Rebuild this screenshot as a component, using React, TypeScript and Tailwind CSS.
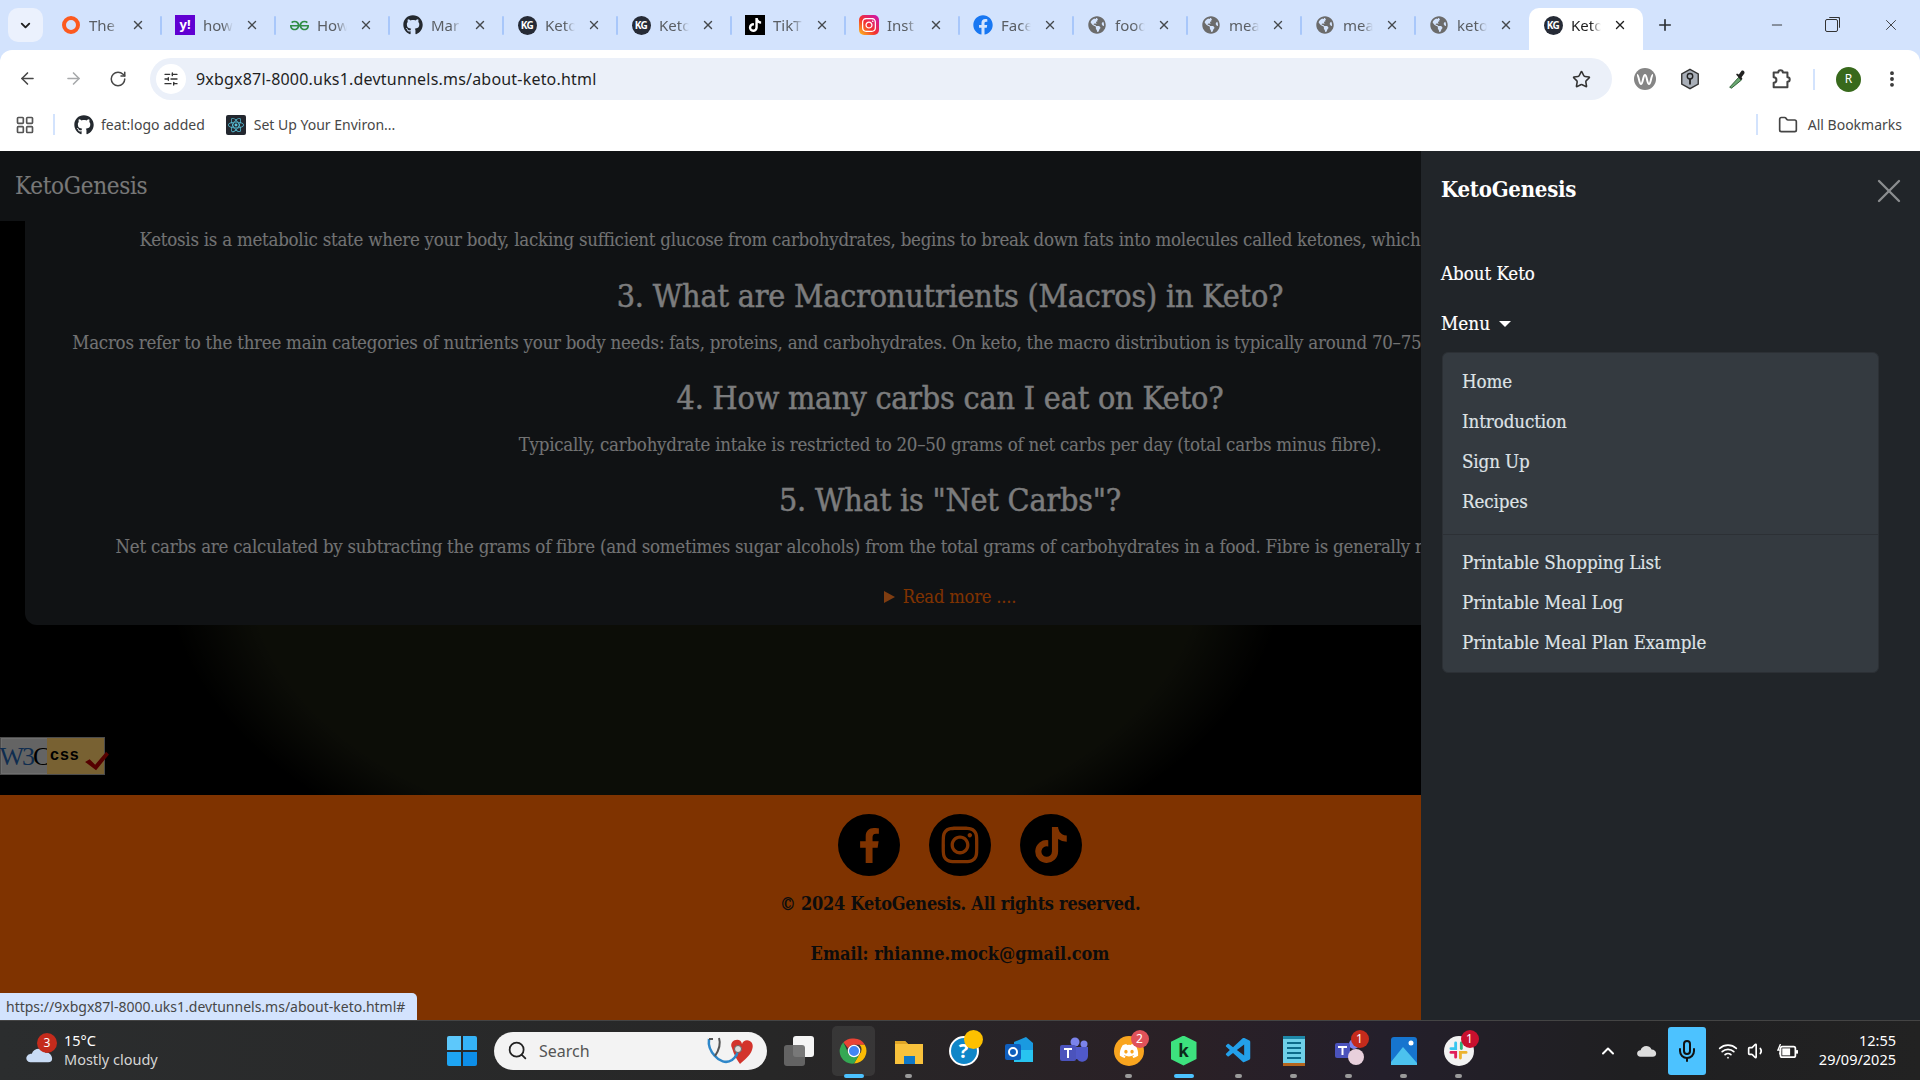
import type { ReactNode } from 'react';
import { ArrowLeft, ArrowRight, ChevronDown, ChevronUp, EllipsisVertical, Folder, LayoutGrid, Mic, Plus, RotateCw, Search, SlidersHorizontal, Star, Volume1, Wifi, X, Minus } from 'lucide-react';
import { FaDiscord, FaFacebook, FaFacebookF, FaGithub, FaGlobeAmericas, FaInstagram, FaTiktok } from 'react-icons/fa';
import { SiGeeksforgeeks, SiReact } from 'react-icons/si';
import { VscVscode } from 'react-icons/vsc';

const Globe = () => <FaGlobeAmericas className="size-[18px] text-[#6b6b6b]" />;
const Kg = () => (
  <div className="flex size-[19px] items-center justify-center rounded-full bg-[#262b36] text-[10px] font-bold tracking-[-0.5px] text-white">KG</div>
);

const tabs: { icon: ReactNode; title: string; active?: boolean }[] = [
  { icon: <div className="size-[18px] rounded-full border-[4px] border-[#fc5a1f]" />, title: 'The' },
  { icon: <div className="flex size-[20px] items-center justify-center bg-[#6001d2] text-[13px] font-bold text-white">y!</div>, title: 'how' },
  { icon: <SiGeeksforgeeks className="size-[19px] text-[#2f8d46]" />, title: 'How' },
  { icon: <FaGithub className="size-[20px] text-[#24292f]" />, title: 'Mar' },
  { icon: <Kg />, title: 'Keto' },
  { icon: <Kg />, title: 'Keto' },
  { icon: <div className="flex size-[20px] items-center justify-center bg-black"><FaTiktok className="size-[14px] text-white" /></div>, title: 'TikT' },
  { icon: <div className="flex size-[20px] items-center justify-center rounded-[5px] bg-[linear-gradient(45deg,#fdc21e,#f3322f_45%,#c913b9)]"><FaInstagram className="size-[16px] text-white" /></div>, title: 'Inst' },
  { icon: <FaFacebook className="size-[20px] text-[#1877f2]" />, title: 'Face' },
  { icon: <Globe />, title: 'food' },
  { icon: <Globe />, title: 'mea' },
  { icon: <Globe />, title: 'mea' },
  { icon: <Globe />, title: 'keto' },
  { icon: <Kg />, title: 'Keto', active: true },
];

function Tab({ icon, title, active, showSep }: { icon: ReactNode; title: string; active?: boolean; showSep: boolean }) {
  return (
    <div className={`relative flex h-[42px] w-[114px] shrink-0 items-center pb-[8px] pl-[14px] pr-[16px] ${active ? 'rounded-t-[10px] bg-white text-[#1f1f1f]' : 'text-[#5a5e63]'}`}>
      <div className="flex w-[20px] shrink-0 justify-center">{icon}</div>
      <div className="ml-[8px] w-[30px] overflow-hidden whitespace-nowrap text-[15px] [mask-image:linear-gradient(to_right,black_65%,transparent)]">{title}</div>
      <X className={`ml-auto size-[14px] ${active ? 'text-[#1f1f1f]' : 'text-[#45494d]'}`} strokeWidth={2.4} />
      {showSep && <div className="absolute top-[8px] right-[-1px] h-[19px] w-[2px] rounded bg-[#a8c7fa]" />}
    </div>
  );
}

function Chrome() {
  return (
    <div className="h-[151px] shrink-0 bg-[#d3e3fd] font-['Noto_Sans','Open_Sans',sans-serif]">
      <div className="flex h-[50px] items-end">
        <div className="mb-[8px] ml-[8px] flex h-[34px] w-[35px] items-center justify-center rounded-[10px] bg-[#ebf1fd]">
          <ChevronDown className="size-[15px] text-[#1f1f1f]" strokeWidth={3} />
        </div>
        <div className="ml-[4px] flex">
          {tabs.map((t, i) => (
            <Tab key={i} icon={t.icon} title={t.title} active={t.active} showSep={i < 12} />
          ))}
        </div>
        <Plus className="mb-[16px] ml-[13px] size-[18px] text-[#2b2f33]" strokeWidth={2.2} />
        <div className="mb-[16px] ml-auto flex items-center text-[#333]">
          <Minus className="mr-[40px] size-[16px]" strokeWidth={1.4} />
          <div className="relative mr-[44px] size-[13px] rounded-[2px] border border-[#333] bg-[#d3e3fd] shadow-[2px_-2px_0_-1px_#d3e3fd,3px_-3px_0_-1px_#333]" />
          <X className="mr-[20px] size-[18px]" strokeWidth={1.2} />
        </div>
      </div>
      <div className="h-[101px] rounded-t-[12px] bg-white">
        <div className="flex h-[50px] items-end">
          <ArrowLeft className="ml-[18px] mb-[12px] size-[19px] text-[#474747]" strokeWidth={2} />
          <ArrowRight className="ml-[27px] mb-[12px] size-[19px] text-[#a7a9ab]" strokeWidth={2} />
          <RotateCw className="ml-[26px] mb-[12px] size-[18px] text-[#474747]" strokeWidth={2} />
          <div className="ml-[23px] flex h-[42px] w-[1462px] items-center rounded-full bg-[#ebf0f9] pl-[6px] pr-[21px]">
            <div className="flex size-[30px] items-center justify-center rounded-full bg-white">
              <SlidersHorizontal className="size-[16px] text-[#333]" strokeWidth={2} />
            </div>
            <div className="ml-[10px] text-[16px] tracking-[0.2px] text-[#1f1f1f]">9xbgx87l-8000.uks1.devtunnels.ms/about-keto.html</div>
            <Star className="ml-auto size-[19px] text-[#333]" strokeWidth={2} />
          </div>
          <div className="mb-[8px] flex h-[26px] items-center">
            <div className="ml-[22px] flex size-[22px] items-center justify-center rounded-full bg-[#858585]">
              <svg viewBox="0 0 20 20" className="size-[20px]"><path d="M2 6c2 0 2 9 4 9s2-9 4-9 2 9 4 9 2-9 4-9" fill="none" stroke="#fff" strokeWidth="2" /></svg>
            </div>
            <svg viewBox="0 0 24 24" className="ml-[23px] size-[22px]"><path d="M12 1.5 21 6.5v11l-9 5-9-5v-11z" fill="#a9afb8" stroke="#333" strokeWidth="1.5" /><circle cx="12" cy="9" r="3" fill="none" stroke="#222" strokeWidth="1.5" /><path d="M12 12v6" stroke="#222" strokeWidth="2" /></svg>
            <svg viewBox="0 0 24 24" className="ml-[25px] size-[22px]"><path d="M4 21 14 10l3 3L6 22z" fill="#6aa871" stroke="#2d5a34" strokeWidth="1" /><path d="M14 7l3-4c2-1 4 1 3 3l-3 4 1 2-2 1-5-6 1-1z" fill="#222" /></svg>
            <svg viewBox="0 0 24 24" className="ml-[22px] size-[22px]"><path d="M4 5h5a2.5 2.5 0 0 1 5 0h5v5a2.5 2.5 0 0 1 0 5v6H4v-5a2.5 2.5 0 0 0 0-6z" fill="none" stroke="#444" strokeWidth="2.2" strokeLinejoin="round" /></svg>
            <div className="ml-[21px] h-[21px] w-[2px] bg-[#d3e3fd]" />
            <div className="ml-[21px] flex size-[25px] items-center justify-center rounded-full bg-[#38691c] text-[12px] text-white">R</div>
            <EllipsisVertical className="ml-[21px] size-[20px] text-[#333]" strokeWidth={2.6} />
          </div>
        </div>
        <div className="flex h-[51px] items-center pb-[2px] text-[14px] text-[#474747]">
          <LayoutGrid className="ml-[15px] size-[20px] text-[#555]" strokeWidth={2} />
          <div className="ml-[18px] h-[21px] w-[2px] bg-[#d3e3fd]" />
          <FaGithub className="ml-[19px] size-[20px] text-[#24292f]" />
          <div className="ml-[7px]">feat:logo added</div>
          <div className="ml-[21px] flex size-[20px] items-center justify-center rounded-[2px] bg-[#23272f]"><SiReact className="size-[16px] text-[#58c4dc]" /></div>
          <div className="ml-[8px]">Set Up Your Environ...</div>
          <div className="ml-auto h-[21px] w-[2px] bg-[#d3e3fd]" />
          <Folder className="ml-[20px] size-[20px] text-[#444]" strokeWidth={2} />
          <div className="ml-[10px] mr-[18px]">All Bookmarks</div>
        </div>
      </div>
    </div>
  );
}

function Section({ heading, text }: { heading: string; text: string }) {
  return (
    <>
      <h2 className="flex h-[48px] items-center justify-center whitespace-nowrap text-[32px] font-normal tracking-[-0.2px] text-[#f8f9fa] [-webkit-text-stroke:0.4px_#f8f9fa]">{heading}</h2>
      <p className="mt-[8px] mb-[16px] flex h-[30px] items-center justify-center whitespace-nowrap text-[18.5px] tracking-[-0.24px] text-[#e4e5e6]">{text}</p>
    </>
  );
}

const dropItems = ['Home', 'Introduction', 'Sign Up', 'Recipes'];
const printItems = ['Printable Shopping List', 'Printable Meal Log', 'Printable Meal Plan Example'];

function Page() {
  return (
    <div className="relative flex min-h-0 flex-1 flex-col overflow-hidden font-['DejaVu_Serif_Condensed','DejaVu_Serif',serif]">
      <nav className="flex h-[70px] shrink-0 items-center bg-[#212529] pl-[15px] text-[24px] tracking-[-0.3px] text-[#f0f0f0]">KetoGenesis</nav>
      <main className="min-h-0 flex-1 bg-[radial-gradient(ellipse_560px_330px_at_725px_350px,#181a0f_85%,#000_100%)]">
        <div className="ml-[25px] flex h-[404px] w-[1850px] flex-col rounded-b-[12px] bg-[#212529] pt-[4px]">
          <p className="mb-[17px] flex h-[30px] items-center justify-center whitespace-nowrap text-[18.5px] tracking-[-0.24px] text-[#e4e5e6]">
            Ketosis is a metabolic state where your body, lacking sufficient glucose from carbohydrates, begins to break down fats into molecules called ketones, which are then used for fuel by the whole body.
          </p>
          <Section
            heading="3. What are Macronutrients (Macros) in Keto?"
            text="Macros refer to the three main categories of nutrients your body needs: fats, proteins, and carbohydrates. On keto, the macro distribution is typically around 70–75% fat, 20–25% protein and 5–10% carbohydrates."
          />
          <Section
            heading="4. How many carbs can I eat on Keto?"
            text="Typically, carbohydrate intake is restricted to 20–50 grams of net carbs per day (total carbs minus fibre)."
          />
          <Section
            heading='5. What is "Net Carbs"?'
            text="Net carbs are calculated by subtracting the grams of fibre (and sometimes sugar alcohols) from the total grams of carbohydrates in a food. Fibre is generally not digested by the body and is not included."
          />
          <div className="mt-[4px] flex h-[30px] items-center justify-center text-[18.2px] tracking-[-0.2px] text-[#ff6600]">
            <span className="mr-[8px] h-0 w-0 border-y-[6px] border-l-[11px] border-y-transparent border-l-[#ff7a22]" />
            Read more ....
          </div>
        </div>
        <div className="relative mt-[112px] flex h-[38px] w-[105px] border border-[#999] bg-[#c9c9c9] font-['Liberation_Serif',serif] shadow-[inset_0_0_0_1px_#ddd]">
          <div className="flex w-[46px] items-center justify-center text-[26px] tracking-[-2px] text-[#1f5a9e]">W3<span className="text-black">C</span></div>
          <div className="flex flex-1 items-start bg-[#f1c365] pl-[3px] pt-[7px] font-['Liberation_Sans',sans-serif] text-[16px] leading-[20px] font-bold tracking-[1px] text-black">css</div>
          <svg viewBox="0 0 30 24" className="absolute right-[-7px] bottom-[2px] h-[22px] w-[28px]"><path d="M2 13l5-3 6 6L25 2l3 3-14 17z" fill="#a00" /></svg>
        </div>
      </main>
      <footer className="flex h-[225px] shrink-0 flex-col items-center bg-[#ff6600] pt-[19px] text-[#191919]">
        <div className="flex gap-[29px]">
          <div className="flex size-[62px] items-center justify-center rounded-full bg-black"><FaFacebookF className="size-[35px] text-[#ff6600]" /></div>
          <div className="flex size-[62px] items-center justify-center rounded-full bg-black"><FaInstagram className="size-[42px] text-[#ff6600]" /></div>
          <div className="flex size-[62px] items-center justify-center rounded-full bg-black"><FaTiktok className="size-[36px] text-[#ff6600]" /></div>
        </div>
        <div className="mt-[13px] text-[18px] leading-[30px] font-bold tracking-[-0.25px]">© 2024 KetoGenesis. All rights reserved.</div>
        <div className="mt-[20px] text-[18px] leading-[30px] font-bold tracking-[-0.05px]">Email: rhianne.mock@gmail.com</div>
      </footer>
      {/* offcanvas backdrop + panel */}
      <div className="absolute inset-0 bg-black/50" />
      <aside className="absolute inset-y-0 right-0 w-[499px] bg-[#212529] px-[20px] text-white">
        <div className="flex h-[72px] items-center justify-between pt-[5px]">
          <div className="text-[22px] font-bold tracking-[-0.25px]">KetoGenesis</div>
          <X className="relative top-[1px] mr-[-9px] size-[40px] text-[#8b8d8f]" strokeWidth={1.4} />
        </div>
        <div className="mt-[36px] text-[18.5px] leading-[30px] [-webkit-text-stroke:0.2px_#fff]">About Keto</div>
        <div className="mt-[20px] flex items-center text-[18.8px] leading-[30px] [-webkit-text-stroke:0.2px_#fff]">
          Menu
          <span className="ml-[9px] h-0 w-0 border-x-[6px] border-t-[6px] border-x-transparent border-t-white" />
        </div>
        <div className="mt-[13px] ml-[1px] w-[437px] rounded-[6px] border border-[#2c3035] bg-[#343a40] pt-[9px] pb-[9px] text-[18.6px] tracking-[-0.1px] text-[#dee2e6] [-webkit-text-stroke:0.2px_#dee2e6]">
          {dropItems.map((item) => (
            <div key={item} className="px-[19px] leading-[40px]">{item}</div>
          ))}
          <div className="mt-[12px] mb-[8px] h-px bg-[#2c3035]" />
          {printItems.map((item) => (
            <div key={item} className="px-[19px] leading-[40px]">{item}</div>
          ))}
        </div>
      </aside>
      <div className="absolute bottom-0 left-0 flex h-[27px] w-[417px] items-center rounded-tr-[5px] bg-[#d3e3fd] pl-[6px] font-['Noto_Sans',sans-serif] text-[14px] text-[#474747]">
        https://9xbgx87l-8000.uks1.devtunnels.ms/about-keto.html#
      </div>
    </div>
  );
}

function Badge({ n, tone = 'bg-[#c42b1c]' }: { n: string; tone?: string }) {
  return <div className={`absolute -top-[6px] -right-[5px] flex size-[18px] items-center justify-center rounded-full text-[12px] text-white ${tone}`}>{n}</div>;
}

function Dock({ children, mark, badge }: { children: ReactNode; mark?: 'dot' | 'bar'; badge?: ReactNode }) {
  return (
    <div className="relative flex h-[60px] w-[55px] shrink-0 items-center justify-center">
      <div className="relative flex size-[30px] items-center justify-center">
        {children}
        {badge}
      </div>
      {mark === 'dot' && <div className="absolute bottom-[3px] h-[4px] w-[7px] rounded-full bg-[#9a9a9a]" />}
      {mark === 'bar' && <div className="absolute bottom-[3px] h-[4px] w-[20px] rounded-full bg-[#4cc2ff]" />}
    </div>
  );
}

function Taskbar() {
  return (
    <div className="relative flex h-[60px] shrink-0 items-center border-t border-[#444] bg-[linear-gradient(90deg,#2b2d2e_0%,#272727_40%,#2a2026_62%,#241f2b_72%,#1f1f21_85%,#222222_100%)] font-['Noto_Sans',sans-serif] text-white">
      <div className="relative ml-[25px] h-[34px] w-[39px] shrink-0">
        <svg viewBox="0 0 32 22" className="absolute bottom-[4px] left-0 w-[31px]"><path d="M7 21c-8 0-7-9 0-9 2-6 11-7 14-1 7-1 10 10 3 10z" fill="#c9dcf5" /></svg>
        <div className="absolute top-[-1px] right-[7px] flex size-[20px] items-center justify-center rounded-full bg-[#c42b1c] text-[12px]">3</div>
      </div>
      <div className="mb-[1px] w-[370px] shrink-0 text-[14.5px] leading-[19px]">
        <div>15°C</div>
        <div className="text-[#d5d5d5]">Mostly cloudy</div>
      </div>
      <Dock>
        <div className="grid grid-cols-2 gap-[2px]">
          <div className="size-[14px] rounded-tl-[2px] bg-[#5dc8fb]" />
          <div className="size-[14px] rounded-tr-[2px] bg-[#35b3f7]" />
          <div className="size-[14px] rounded-bl-[2px] bg-[#1ea5f3]" />
          <div className="size-[14px] rounded-br-[2px] bg-[#0d8ee8]" />
        </div>
      </Dock>
      <div className="ml-[5px] flex h-[38px] w-[273px] shrink-0 items-center rounded-full bg-[#f3f3f3] pl-[13px] text-[16px] text-[#555]">
        <Search className="size-[21px] text-[#222]" strokeWidth={2} />
        <div className="ml-[11px]">Search</div>
        <svg viewBox="0 0 52 32" className="ml-auto mr-[11px] h-[34px] w-[52px]">
          <path d="M28 13c-4-8 9-12 10-4 2-7 14-4 10 6-2 6-8 10-12 14-3-4-6-9-8-16z" fill="#d3342c" />
          <path d="M5 4c-1 7 2 13 6 17 4 5 11 8 17 4 4-3 6-7 6-11" fill="none" stroke="#2e87c9" strokeWidth="2.5" />
          <path d="M5 4h4M15 3c2 6 0 12-4 18" fill="none" stroke="#555" strokeWidth="2" />
          <circle cx="34" cy="14" r="3.5" fill="#ddd" stroke="#666" />
        </svg>
      </div>
      <div className="ml-[4px] flex h-[60px] w-[55px] shrink-0 items-center justify-center">
        <div className="relative size-[30px]">
          <div className="absolute top-0 right-0 size-[21px] rounded-[3px] bg-[#f5f5f5]" />
          <div className="absolute bottom-0 left-0 size-[21px] rounded-[3px] bg-[#6a6a6a]/90" />
        </div>
      </div>
      <div className="relative flex h-[60px] w-[55px] shrink-0 items-center justify-center">
        <div className="absolute inset-x-[6px] top-[5px] bottom-[5px] rounded-[5px] bg-white/8" />
        <svg viewBox="0 0 48 48" className="relative size-[30px]">
          <path d="M24 4a20 20 0 0 1 17.3 10H24a10 10 0 0 0-9.2 6L7 10A20 20 0 0 1 24 4z" fill="#ea4335" />
          <path d="M41.3 14A20 20 0 0 1 24 44l8.7-15a10 10 0 0 0 0-15z" fill="#fbbc04" />
          <path d="M7 10l8.7 19a10 10 0 0 0 17 0L24 44A20 20 0 0 1 7 10z" fill="#34a853" />
          <circle cx="24" cy="24" r="9" fill="#4285f4" stroke="#fff" strokeWidth="2" />
        </svg>
        <div className="absolute bottom-[3px] h-[4px] w-[20px] rounded-full bg-[#4cc2ff]" />
      </div>
      <Dock mark="dot">
        <svg viewBox="0 0 30 30" className="size-[30px]"><path d="M1 5h10l3 3h15v20H1z" fill="#f9c23c" /><path d="M1 5h10l3 3H1z" fill="#e0a526" /><rect x="10" y="20" width="11" height="8" fill="#0f78c8" /></svg>
      </Dock>
      <Dock badge={<div className="absolute -top-[6px] -right-[4px] size-[19px] rounded-full bg-[#fdc000]" />}>
        <div className="flex size-[30px] items-center justify-center rounded-full border-[2px] border-white bg-[#0f86c8] text-[20px] font-bold">?</div>
      </Dock>
      <Dock>
        <svg viewBox="0 0 30 30" className="size-[30px]"><path d="M10 6 22 1l7 6v16H10z" fill="#1a9ae0" /><path d="M10 14h19v12H10z" fill="#28c4f0" /><rect x="1" y="8" width="16" height="16" rx="2" fill="#0f5ebd" /><circle cx="9" cy="16" r="4" fill="none" stroke="#fff" strokeWidth="2" /></svg>
      </Dock>
      <Dock>
        <svg viewBox="0 0 30 30" className="size-[30px]"><circle cx="25" cy="8" r="3.5" fill="#7b83eb" /><circle cx="16" cy="6" r="4.5" fill="#7b83eb" /><path d="M11 11h18v9a6 6 0 0 1-11 3 6 6 0 0 1-7-3z" fill="#5059c9" /><rect x="1" y="9" width="16" height="16" rx="2" fill="#4b53bc" /><path d="M5 13h8M9 13v9" stroke="#fff" strokeWidth="2" /></svg>
      </Dock>
      <Dock mark="dot" badge={<Badge n="2" tone="bg-[#e0525a]" />}>
        <div className="flex size-[30px] items-center justify-center rounded-full bg-[#f9a51f]"><FaDiscord className="size-[20px] text-white" /></div>
      </Dock>
      <Dock mark="bar">
        <div className="flex h-[30px] w-[26px] items-center justify-center bg-[#3de27e] text-[17px] font-bold text-[#0c2a1a] [clip-path:polygon(50%_0,100%_22%,100%_78%,50%_100%,0_78%,0_22%)]">k</div>
      </Dock>
      <Dock mark="dot">
        <VscVscode className="size-[30px] text-[#23a0ea]" />
      </Dock>
      <Dock mark="dot">
        <div className="flex h-[30px] w-[22px] flex-col justify-center gap-[3px] border-t-[3px] border-b-[3px] border-t-[#1e88a8] border-b-[#b5651d] bg-[#6fd0e8] px-[4px]">
          <div className="h-[2px] bg-[#0d6b8a]" />
          <div className="h-[2px] bg-[#0d6b8a]" />
          <div className="h-[2px] bg-[#0d6b8a]" />
          <div className="h-[2px] bg-[#0d6b8a]" />
        </div>
      </Dock>
      <Dock mark="dot" badge={<Badge n="1" />}>
        <svg viewBox="0 0 30 30" className="size-[30px]"><circle cx="20" cy="8" r="5" fill="#7b83eb" /><rect x="1" y="7" width="15" height="15" rx="2" fill="#4b53bc" /><path d="M4 11h9M8.5 11v8" stroke="#fff" strokeWidth="2" /><circle cx="22" cy="21" r="8" fill="#e8d0dc" /></svg>
      </Dock>
      <Dock mark="dot">
        <svg viewBox="0 0 30 30" className="size-[30px]"><rect x="2" y="1" width="26" height="28" rx="3" fill="#1675cf" /><path d="M2 26 14 11l14 16v2H2z" fill="#4cc2ee" /><circle cx="22" cy="7" r="2.5" fill="#fff" /></svg>
      </Dock>
      <Dock mark="dot" badge={<Badge n="1" tone="bg-[#c8102e]" />}>
        <div className="flex size-[30px] items-center justify-center rounded-full bg-[#f2f2f2]">
          <svg viewBox="0 0 20 20" className="size-[19px]">
            <path d="M7 2v6H2" fill="none" stroke="#36c5f0" strokeWidth="3" strokeLinecap="round" />
            <path d="M13 2v6" stroke="#2eb67d" strokeWidth="3" strokeLinecap="round" />
            <path d="M18 12h-6v6" fill="none" stroke="#ecb22e" strokeWidth="3" strokeLinecap="round" />
            <path d="M2 12h5v5" fill="none" stroke="#e01e5a" strokeWidth="3" strokeLinecap="round" />
          </svg>
        </div>
      </Dock>
      <ChevronUp className="ml-[112px] size-[20px] shrink-0" strokeWidth={2.4} />
      <svg viewBox="0 0 24 16" className="ml-[18px] w-[22px] shrink-0"><path d="M5 15c-5 0-5-7 0-7 1-5 9-7 12-1 6 0 7 8 1 8z" fill="#dcdcdc" /></svg>
      <div className="ml-[10px] flex h-[48px] w-[38px] shrink-0 items-center justify-center rounded-[3px] bg-[#4cc2ff]">
        <Mic className="size-[24px] text-[#111]" strokeWidth={2} />
      </div>
      <Wifi className="ml-[12px] size-[20px] shrink-0" strokeWidth={2} />
      <Volume1 className="ml-[9px] size-[20px] shrink-0" strokeWidth={2} />
      <svg viewBox="0 0 24 16" className="ml-[10px] w-[21px] shrink-0"><rect x="4" y="3" width="17" height="12" rx="2" fill="none" stroke="#fff" strokeWidth="2" /><rect x="6" y="5" width="9" height="8" fill="#fff" /><path d="M21 7h3v4h-3z" fill="#fff" /><path d="M4 0 1 7h3l-1 5" fill="none" stroke="#fff" strokeWidth="1.5" /></svg>
      <div className="mb-[2px] ml-auto mr-[24px] text-right text-[14.5px] leading-[19px]">
        <div>12:55</div>
        <div>29/09/2025</div>
      </div>
    </div>
  );
}

export default function App() {
  return (
    <div className="flex h-screen w-[1920px] flex-col overflow-hidden">
      <Chrome />
      <Page />
      <Taskbar />
    </div>
  );
}
